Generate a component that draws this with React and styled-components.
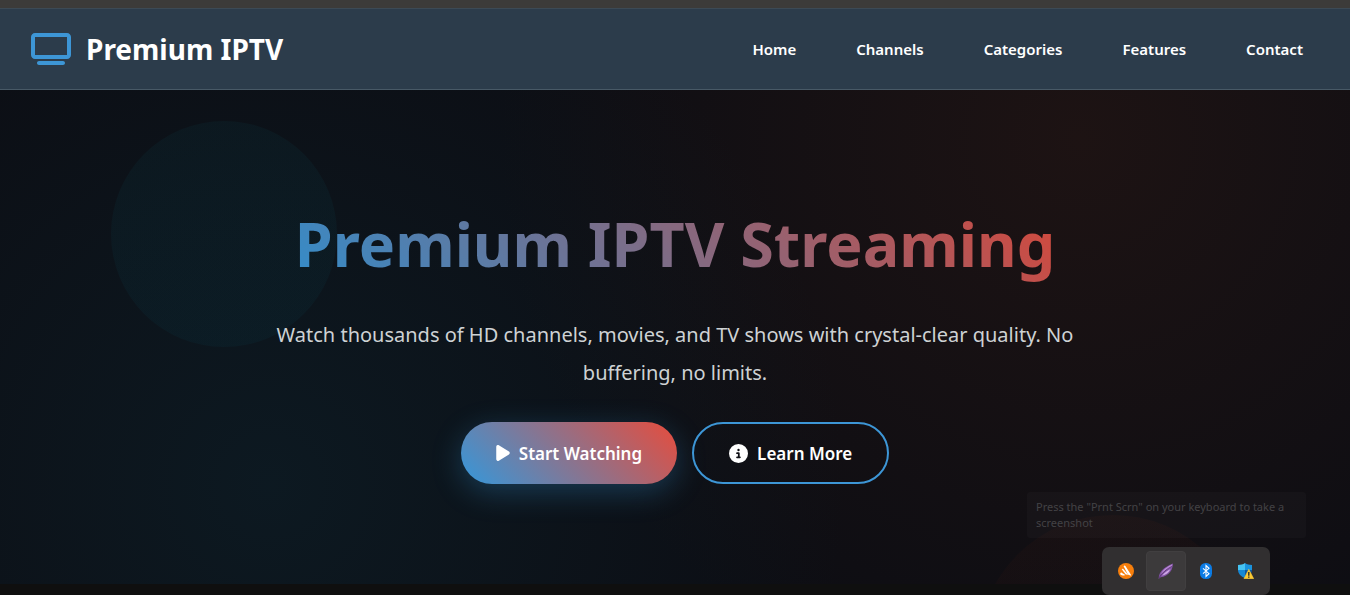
// App.jsx

import React from 'react';
import styled, { createGlobalStyle } from 'styled-components';
import { FaTv, FaPlay, FaCircleInfo } from 'react-icons/fa6';

const GlobalStyle = createGlobalStyle`
  * {
    box-sizing: border-box;
    margin: 0;
    padding: 0;
  }

  body {
    background-color: #0f0f0f;
    color: #ffffff;
    font-family: 'Noto Sans', 'Open Sans', sans-serif;
    overflow-x: hidden;
  }
`;

const Page = styled.div`
  position: relative;
  min-height: 100vh;
  overflow: hidden;
`;

const TopStrip = styled.div`
  height: 8px;
  background-color: #3c3b39;
`;

const Header = styled.header`
  display: flex;
  justify-content: space-between;
  align-items: center;
  height: 82px;
  padding: 0 31px;
  background-color: #2c3c4b;
  border-top: 1px solid #3c4a55;
  border-bottom: 1px solid #485966;
`;

const Logo = styled.a`
  display: flex;
  align-items: center;
  gap: 15px;
  color: #ffffff;
  font-size: 28px;
  font-weight: 700;
  text-decoration: none;
`;

const LogoIcon = styled(FaTv)`
  width: 40px;
  height: 32px;
  color: #3d96d6;
`;

const Nav = styled.nav`
  display: flex;
  gap: 28px;
`;

const NavLink = styled.a`
  padding: 8px 16px;
  color: #ffffff;
  font-size: 15px;
  font-weight: 600;
  text-decoration: none;
`;

const Hero = styled.section`
  position: relative;
  padding: 100px 20px;
  text-align: center;
  overflow: hidden;
  background:
    radial-gradient(circle at 20% 80%, rgba(14, 56, 70, 0.28) 0%, transparent 50%),
    radial-gradient(circle at 80% 10%, rgba(90, 40, 20, 0.22) 0%, transparent 50%),
    #0c0d13;
`;

// Soft discs floating behind the hero text
const Disc = styled.div`
  position: absolute;
  border-radius: 50%;
`;

const BlueDisc = styled(Disc)`
  top: 31px;
  left: 111px;
  width: 226px;
  height: 226px;
  background: linear-gradient(180deg, rgba(12, 66, 76, 0.15), rgba(8, 66, 82, 0.14));
`;

const RedDisc = styled(Disc)`
  top: 425px;
  right: 102px;
  width: 270px;
  height: 270px;
  background: linear-gradient(180deg, rgba(90, 32, 16, 0.09), rgba(80, 32, 16, 0.03));
`;

const HeroContent = styled.div`
  position: relative;
  max-width: 800px;
  margin: 0 auto;
`;

const Title = styled.h1`
  width: fit-content;
  margin: 0 auto 18px;
  font-size: 61px;
  font-weight: 700;
  line-height: 108px;
  white-space: nowrap;
  color: transparent;
  background: linear-gradient(45deg, #3498db, #e74c3c);
  background-clip: text;
  opacity: 0.92;
`;

const Subtitle = styled.p`
  margin-bottom: 30px;
  color: #ced2d4;
  font-size: 20px;
  line-height: 38px;
`;

const Actions = styled.div`
  display: flex;
  justify-content: center;
  gap: 15px;
`;

const Button = styled.button`
  display: flex;
  align-items: center;
  justify-content: center;
  gap: 9px;
  height: 62px;
  padding: 0 35px;
  border: ${(props) => (props.$outline ? '2px solid #3d96d6' : 'none')};
  border-radius: 50px;
  background: ${(props) => (props.$outline ? 'transparent' : 'linear-gradient(45deg, #3498db, #e74c3c)')};
  box-shadow: ${(props) => (props.$outline ? 'none' : '0 8px 30px rgba(52, 152, 219, 0.3)')};
  color: #ffffff;
  font-family: inherit;
  font-size: 17px;
  font-weight: 600;
  cursor: pointer;
`;

const PlayIcon = styled(FaPlay)`
  width: 14px;
  height: 18px;
`;

const InfoIcon = styled(FaCircleInfo)`
  width: 19px;
  height: 19px;
`;

const Hint = styled.div`
  position: absolute;
  right: 44px;
  bottom: 57px;
  width: 279px;
  padding: 7px 8px 7px 9px;
  border-radius: 3px;
  background-color: rgba(255, 255, 255, 0.025);
  color: #434245;
  font-size: 11px;
  line-height: 16px;
`;

const Tray = styled.div`
  position: absolute;
  right: 80px;
  bottom: 0;
  display: flex;
  padding: 4px;
  border-radius: 7px;
  background-color: #312f30;
`;

const TrayButton = styled.button`
  display: flex;
  align-items: center;
  justify-content: center;
  width: 40px;
  height: 40px;
  border: 1px solid ${(props) => (props.$active ? '#413f40' : 'transparent')};
  border-radius: 4px;
  background-color: ${(props) => (props.$active ? '#3c3a3b' : 'transparent')};
`;

const AntivirusIcon = () => (
  <svg width="16" height="16" viewBox="0 0 16 16">
    <circle cx="8" cy="8" r="8" fill="#f77f0c" />
    <path d="M5.6 3.2c.5-.9 1.500-.9 2 0l5.200 8.300c.4.7.1 1.300-.6 1.100L9.900 11.600z" fill="#fff" />
    <path d="M3.700 6.300c.4-.7 1.200-.7 1.800-.1l4.700 5.600-2.400-.2z" fill="#fff" />
    <path d="M2.300 10.200c.3-.7 1-.8 1.700-.3l3.300 2c-1.300.6-2.900.9-4.200.1-.7-.4-1-1.100-.8-1.800z" fill="#fff" />
  </svg>
);

const FeatherIcon = () => (
  <svg width="16" height="16" viewBox="0 0 16 16">
    <path d="M15 .4C11 1.800 6.500 4.400 3.800 7.400 1.800 9.600.9 12 .6 15.900l2-1.600c3.600-.4 7.600-2.200 10.100-6C14 6.300 14.800 3.500 15 .4z" fill="#8253a6" />
    <path d="M14.200 1.300C9.500 3.600 4.700 6.600 3 11.200c2.600-2.900 6.500-5.200 10.700-7.800z" fill="#b98ad6" />
    <path d="M12.600 6c-3 1.500-6.200 3.600-8.500 6.700C7.800 11.800 10.800 9.700 12.600 6z" fill="#d0a9e6" />
    <path d="M13.800 3.400C8.800 6 4.200 9.300 1 15" fill="none" stroke="#563069" strokeWidth=".8" />
  </svg>
);

const BluetoothIcon = () => (
  <svg width="12" height="16" viewBox="0 0 12 16">
    <rect width="12" height="16" rx="5.500" fill="#0b7be4" />
    <path d="M3 5.300l6 5.400-3 2.800v-11l3 2.800-6 5.400" fill="none" stroke="#fff" strokeWidth="1.100" />
  </svg>
);

const ShieldIcon = () => (
  <svg width="16" height="16" viewBox="0 0 16 16">
    <path d="M7 0C5 1.400 2.800 1.900 0 1.900v5h7z" fill="#45c4f3" />
    <path d="M7 0c2 1.400 4.200 1.900 7 1.900v5H7z" fill="#1b93dc" />
    <path d="M0 6.900h7V15C2.800 13.400.2 10.700 0 6.900z" fill="#1688d4" />
    <path d="M14 6.900H7V15c4.200-1.600 6.800-4.300 7-8.100z" fill="#0c59a4" />
    <path d="M10.800 6.300l4.900 9.400H6z" fill="#fcc933" stroke="#fcc933" strokeWidth=".6" strokeLinejoin="round" />
    <path d="M10.800 9v3.700M10.800 13.600v1.200" stroke="#222" strokeWidth="1.300" />
  </svg>
);

const links = ['Home', 'Channels', 'Categories', 'Features', 'Contact'];

const App = () => {
  return (
    <Page>
      <GlobalStyle />
      <TopStrip />
      <Header>
        <Logo href="#home">
          <LogoIcon />
          Premium IPTV
        </Logo>
        <Nav>
          {links.map((link) => (
            <NavLink key={link} href={`#${link.toLowerCase()}`}>
              {link}
            </NavLink>
          ))}
        </Nav>
      </Header>
      <Hero>
        <BlueDisc />
        <RedDisc />
        <HeroContent>
          <Title>Premium IPTV Streaming</Title>
          <Subtitle>
            Watch thousands of HD channels, movies, and TV shows with crystal-clear quality. No buffering, no limits.
          </Subtitle>
          <Actions>
            <Button>
              <PlayIcon />
              Start Watching
            </Button>
            <Button $outline>
              <InfoIcon />
              Learn More
            </Button>
          </Actions>
        </HeroContent>
      </Hero>
      <Hint>Press the "Prnt Scrn" on your keyboard to take a screenshot</Hint>
      <Tray>
        <TrayButton aria-label="Antivirus">
          <AntivirusIcon />
        </TrayButton>
        <TrayButton $active aria-label="Screenshot tool">
          <FeatherIcon />
        </TrayButton>
        <TrayButton aria-label="Bluetooth">
          <BluetoothIcon />
        </TrayButton>
        <TrayButton aria-label="Security">
          <ShieldIcon />
        </TrayButton>
      </Tray>
    </Page>
  );
};

export default App;
